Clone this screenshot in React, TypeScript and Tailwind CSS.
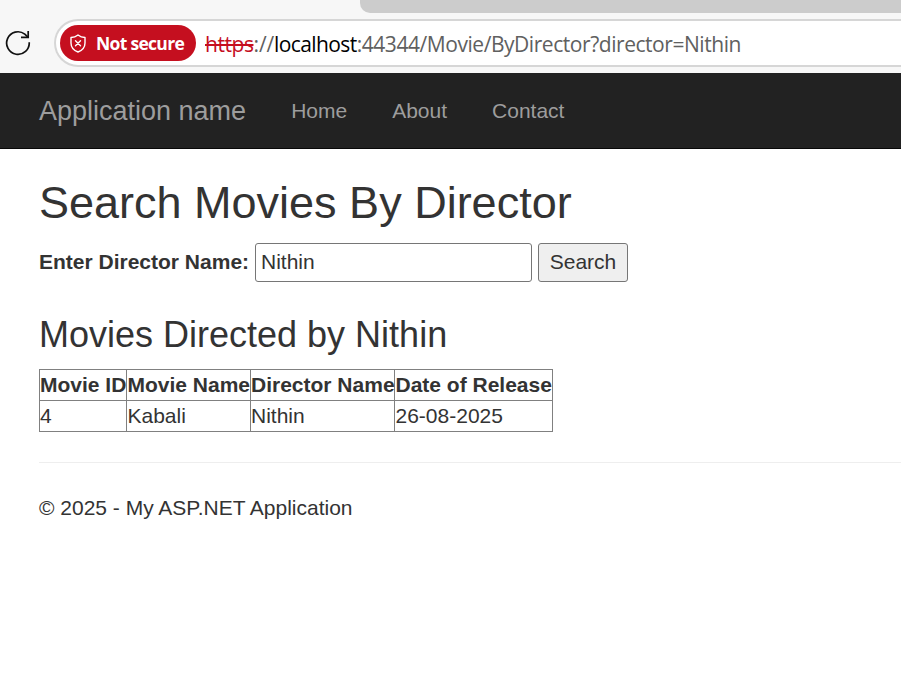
import React from "react";

const movies = [
  { id: 4, name: "Kabali", director: "Nithin", release: "26-08-2025" },
];

function ReloadIcon() {
  return (
    <svg width="26" height="26" viewBox="0 0 26 26" fill="none" stroke="#111" strokeWidth="1.7" className="ml-[5px] shrink-0">
      <path d="M24.200 12.200A11.300 11.300 0 1 1 19.800 4.100L23.200 7.300" />
      <path d="M23.200 1V7.300H16" />
    </svg>
  );
}

function ShieldIcon() {
  return (
    <svg width="16" height="19" viewBox="0 0 16 19" fill="none" stroke="#fff" strokeWidth="1.4" strokeLinejoin="round" strokeLinecap="round">
      <path d="M8 1C6 2.6 3.700 3.400 1 3.500V9C1 13.300 3.500 16.300 8 18C12.500 16.300 15 13.300 15 9V3.500C12.300 3.400 10 2.600 8 1Z" />
      <path d="M5.500 6.700L10.500 11.700M10.500 6.700L5.500 11.700" />
    </svg>
  );
}

function BrowserBar() {
  return (
    <header className="flex h-[73px] flex-col overflow-hidden bg-[#f7f7f7]">
      <div className="ml-[360px] h-[13px] shrink-0 rounded-bl-[10px] bg-[#cccccc]" />
      <div className="mt-[6px] flex h-12 items-center">
        <ReloadIcon />
        <div className="ml-[23px] flex h-12 flex-1 items-center rounded-l-full border-2 border-r-0 border-[#d6d6d6] bg-white pl-1">
          <div className="flex h-9 w-[136px] shrink-0 items-center rounded-full bg-[#c50f1f] pl-[10px] text-white">
            <ShieldIcon />
            <span className="ml-[10px] whitespace-nowrap font-['Open_Sans',sans-serif] text-[17.5px] font-bold leading-6 tracking-[-0.7px]">Not secure</span>
          </div>
          <div className="ml-[9px] whitespace-nowrap pt-[2px] font-['Open_Sans',sans-serif] text-[21px] leading-7 text-[#606060]">
            <span className="tracking-[-0.45px] text-[#c50f1f] line-through decoration-2">https</span>
            <span className="tracking-[-0.1px]">://</span>
            <span className="tracking-[-0.6px] text-black">localhost</span>
            <span className="tracking-[-0.45px]">:44344/Movie/ByDirector?director=Nithin</span>
          </div>
        </div>
      </div>
    </header>
  );
}

export default function App() {
  return (
    <div className="h-[673px] overflow-hidden bg-white font-['Liberation_Sans',Arial,sans-serif] text-[21px] leading-[30px] text-[#333]">
      <BrowserBar />
      <nav className="flex h-[76px] items-center border-b border-[#080808] bg-[#222] pl-[39px] text-[#9d9d9d]">
        <a className="text-[27px]">Application name</a>
        <a className="ml-[45px]">Home</a>
        <a className="ml-[45px]">About</a>
        <a className="ml-[45px]">Contact</a>
      </nav>
      <main className="pl-[39px] pt-[29px]">
        <h2 className="text-[45px] leading-[49px]">Search Movies By Director</h2>
        <form className="mt-4 flex h-[39px] items-center" onSubmit={(e) => e.preventDefault()}>
          <label htmlFor="director" className="w-[210px] whitespace-nowrap pb-[2px] font-bold">Enter Director Name:</label>
          <input id="director" defaultValue="Nithin" className="ml-[6px] h-[39px] w-[277px] rounded-[3px] border border-[#767676] bg-white px-[5px] pb-[2px]" />
          <button className="ml-[6px] h-[39px] w-[90px] rounded-[3px] border border-[#767676] bg-[#efefef] pb-[2px]">Search</button>
        </form>
        <h3 className="mt-[33px] text-[36px] leading-[40px]">Movies Directed by Nithin</h3>
        <table className="mt-[14px] w-[514px] table-fixed border-collapse border border-[#808080] text-left">
          <colgroup>
            <col className="w-[87px]" />
            <col className="w-[124px]" />
            <col className="w-[144px]" />
            <col className="w-[158px]" />
          </colgroup>
          <thead>
            <tr>
              {["Movie ID", "Movie Name", "Director Name", "Date of Release"].map((title) => (
                <th key={title} className="whitespace-nowrap border border-[#808080] p-0 font-bold even:pl-[0.5px]">{title}</th>
              ))}
            </tr>
          </thead>
          <tbody>
            {movies.map((movie) => (
              <tr key={movie.id}>
                <td className="border border-[#808080] p-0">{movie.id}</td>
                <td className="border border-[#808080] p-0 pl-[0.5px]">{movie.name}</td>
                <td className="border border-[#808080] p-0">{movie.director}</td>
                <td className="border border-[#808080] p-0 pl-[0.5px]">{movie.release}</td>
              </tr>
            ))}
          </tbody>
        </table>
        <hr className="mt-[30px] border-t border-[#eee]" />
        <footer className="mt-[30px]">© 2025 - My ASP.NET Application</footer>
      </main>
    </div>
  );
}
